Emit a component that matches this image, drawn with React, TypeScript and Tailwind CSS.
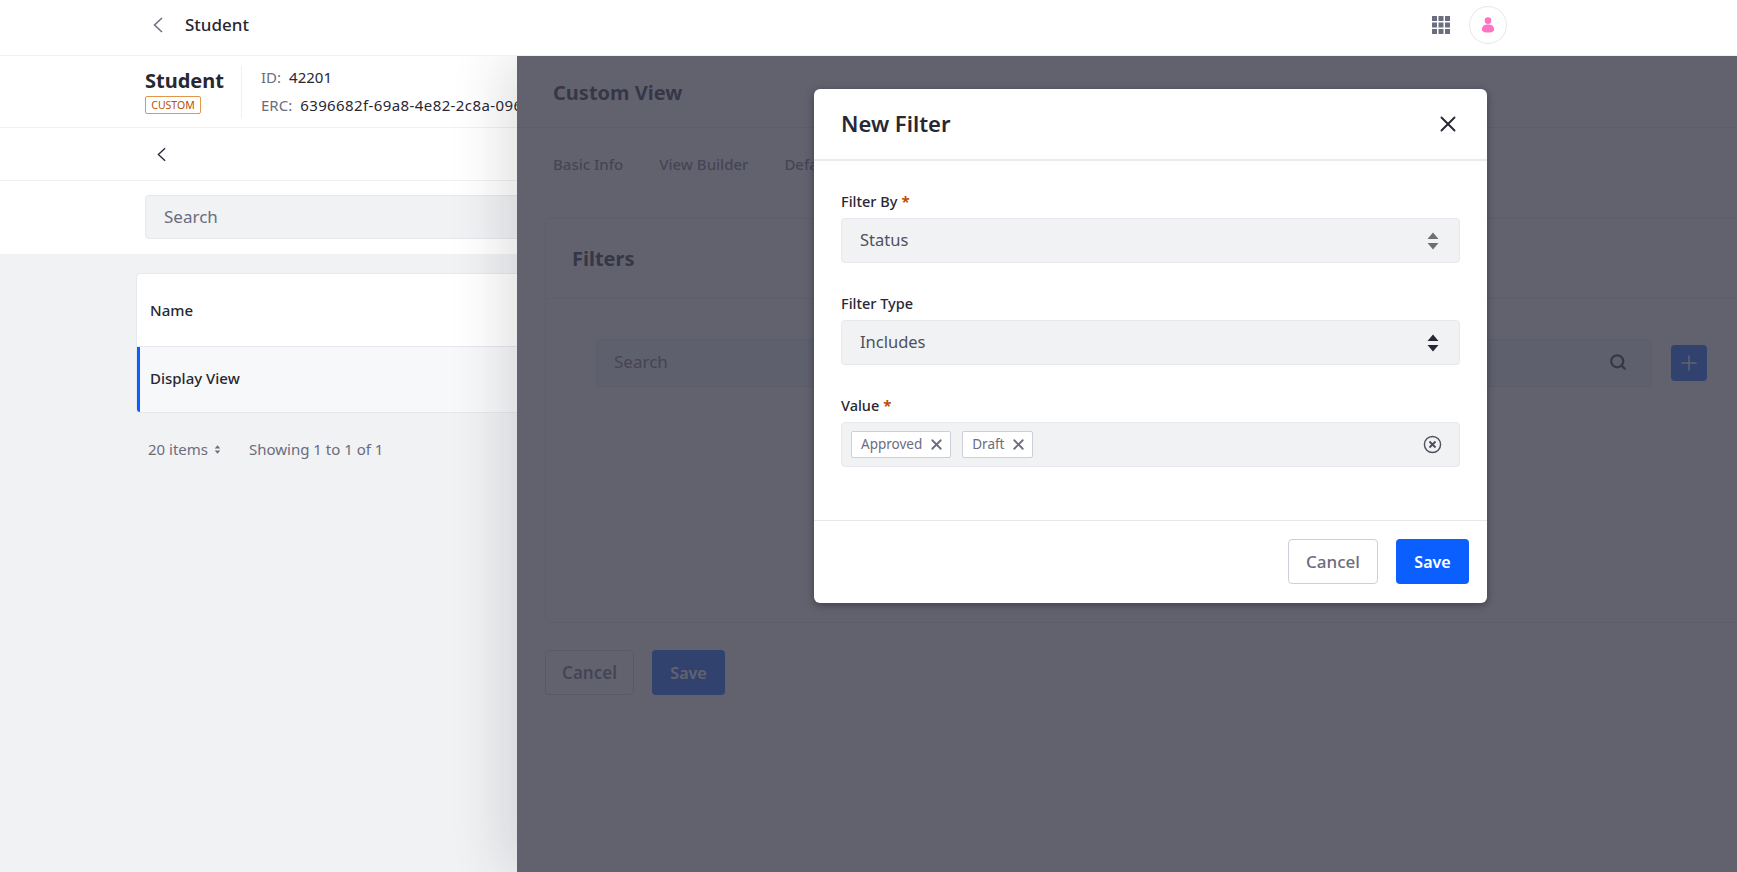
import { Search, Plus, X } from "lucide-react";

function SortArrows({ className }: { className: string }) {
  return (
    <svg viewBox="0 0 12 18" className={className} fill="currentColor">
      <path d="M6 0.5 11.5 7H0.5Z" />
      <path d="M0.5 11H11.5L6 17.5Z" />
    </svg>
  );
}

function BackArrow({ className }: { className: string }) {
  return (
    <svg viewBox="0 0 10 16" className={className} fill="none" stroke="currentColor" strokeWidth="1.5">
      <path d="M9 1 1.5 8 9 15" />
    </svg>
  );
}

function Field({ label, required, children }: { label: string; required?: boolean; children: React.ReactNode }) {
  return (
    <div>
      <label className="mb-[6px] flex h-[20px] items-center text-[14.5px] font-medium text-[#272833]">
        {label}
        {required && <span className="ml-[4px] -mt-[2px] text-[15px] font-bold text-[#b95000]">*</span>}
      </label>
      {children}
    </div>
  );
}

function SelectBox({ value, iconColor }: { value: string; iconColor: string }) {
  return (
    <div className="flex h-[45px] items-center justify-between rounded-[4px] border border-[#e7e7ed] bg-[#f1f2f4] pl-[18px] pr-[20px] text-[16.5px] text-[#4f505c]">
      <span>{value}</span>
      <SortArrows className={`h-[18px] w-[12px] ${iconColor}`} />
    </div>
  );
}

function Chip({ label }: { label: string }) {
  return (
    <span className="flex h-[27px] items-center gap-[6px] rounded-[2px] border border-[#cdced9] bg-white pl-[9px] pr-[5px] text-[13.5px] text-[#6b6c7e]">
      {label}
      <X className="h-[17px] w-[17px] text-[#6b6c7e]" strokeWidth={2.5} />
    </span>
  );
}

export default function App() {
  return (
    <div className="flex h-screen flex-col overflow-hidden bg-white font-['Noto_Sans',sans-serif] text-[#272833]">
      <header className="relative z-10 flex h-[56px] shrink-0 items-center border-b border-[#f0f0f3] bg-white pb-[6px] pl-[153px] pr-[230px]">
        <BackArrow className="h-[16px] w-[10px] text-[#6b6c7e]" />
        <span className="ml-[22px] text-[17px] font-medium">Student</span>
        <div className="ml-auto flex items-center gap-[19px]">
          <svg viewBox="0 0 18 18" className="h-[18px] w-[18px]" fill="#6b6c7e">
            <rect x="0" y="0" width="5" height="5" />
            <rect x="6.5" y="0" width="5" height="5" />
            <rect x="13" y="0" width="5" height="5" />
            <rect x="0" y="6.5" width="5" height="5" />
            <rect x="6.5" y="6.5" width="5" height="5" />
            <rect x="13" y="6.5" width="5" height="5" />
            <rect x="0" y="13" width="5" height="5" />
            <rect x="6.5" y="13" width="5" height="5" />
            <rect x="13" y="13" width="5" height="5" />
          </svg>
          <div className="flex h-[38px] w-[38px] items-center justify-center rounded-full border border-[#e7e7ed]">
            <svg viewBox="0 0 16 18" className="h-[16px] w-[14px]" fill="#ff73c3">
              <circle cx="8" cy="4" r="3.8" />
              <path d="M1 14c0-3.4 2.6-5.5 7-5.5s7 2.1 7 5.5c0 2.4-3 3.5-7 3.5s-7-1.1-7-3.5Z" />
            </svg>
          </div>
        </div>
      </header>

      <div className="relative flex-1">
        <div className="flex h-[72px] items-center border-b border-[#f0f0f3] pl-[145px]">
          <div className="w-[97px] border-r border-[#f0f0f3] pb-[4px] pt-[2px]">
            <div className="text-[20px] leading-[26px] font-bold">Student</div>
            <span className="mt-[2px] block w-[56px] rounded-[2px] border border-[#e0974d] text-center text-[10.5px] leading-[16px] text-[#b95000]">
              CUSTOM
            </span>
          </div>
          <div className="ml-[19px] text-[15px]">
            <div className="mb-[8px] flex h-[20px] items-center">
              <span className="mr-[8px] text-[#6b6c7e]">ID:</span>
              42201
            </div>
            <div className="flex h-[20px] items-center whitespace-nowrap">
              <span className="mr-[8px] text-[#6b6c7e]">ERC:</span>
              <span className="tracking-[0.4px]">6396682f-69a8-4e82-2c8a-096</span>
            </div>
          </div>
        </div>
        <div className="flex h-[53px] items-center border-b border-[#f0f0f3] pl-[157px]">
          <BackArrow className="h-[15px] w-[9px] text-[#272833]" />
        </div>
        <div className="h-[73px] pl-[145px] pt-[14px]">
          <div className="flex h-[44px] items-center rounded-[4px] border border-[#e7e7ed] bg-[#f1f2f4] pl-[18px] text-[17px] text-[#6b6c7e]">
            Search
          </div>
        </div>
        <div className="h-full bg-[#f1f2f4] pl-[136px] pt-[19px]">
          <div className="overflow-hidden rounded-[4px] border border-[#e7e7ed] bg-white">
            <div className="flex h-[73px] items-center border-b border-[#e7e7ed] pl-[13px] text-[15px] font-medium">Name</div>
            <div className="flex h-[65px] items-center border-l-[3px] border-[#0b5fff] bg-[#f7f8f9] pb-[2px] pl-[10px] text-[15px] font-medium">
              Display View
            </div>
          </div>
          <div className="mt-[25px] flex items-center pl-[12px] text-[15px] text-[#6b6c7e]">
            <span>20 items</span>
            <SortArrows className="ml-[6px] h-[9px] w-[7px]" />
            <span className="ml-[28px]">Showing 1 to 1 of 1</span>
          </div>
        </div>

        <div className="absolute inset-y-0 left-[517px] right-0 bg-white shadow-[-14px_0_50px_rgba(39,40,51,0.14)]">
          <div className="flex h-[72px] items-center border-b border-[#e7e7ed] pl-[36px] pt-[2px] text-[20px] font-bold">Custom View</div>
          <div className="flex h-[72px] items-center gap-[36px] pl-[36px] text-[15px] font-medium text-[#6b6c7e]">
            <span>Basic Info</span>
            <span>View Builder</span>
            <span>Default Filters</span>
          </div>
          <div className="ml-[28px] mt-[18px] h-[405px] rounded-l-[4px] border-y border-l border-[#e7e7ed]">
            <div className="flex h-[80px] items-center border-b border-[#e7e7ed] pl-[26px] text-[20px] font-bold">Filters</div>
            <div className="flex items-center pl-[50px] pr-[30px] pt-[40px]">
              <div className="flex h-[48px] flex-1 items-center justify-between rounded-[4px] border border-[#e7e7ed] bg-[#f1f2f4] pb-[2px] pl-[17px] pr-[24px] text-[17px] text-[#6b6c7e]">
                Search
                <Search className="h-[18px] w-[18px] text-[#272833]" strokeWidth={3} />
              </div>
              <div className="ml-[19px] flex h-[36px] w-[36px] items-center justify-center rounded-[4px] bg-[#0b5fff]">
                <Plus className="h-[24px] w-[24px] text-white" strokeWidth={1.5} />
              </div>
            </div>
          </div>
          <div className="ml-[28px] mt-[27px] flex gap-[18px]">
            <div className="flex h-[45px] w-[89px] items-center justify-center rounded-[4px] border border-[#cdced9] text-[17px] font-semibold text-[#6b6c7e]">
              Cancel
            </div>
            <div className="flex h-[45px] w-[73px] items-center justify-center rounded-[4px] bg-[#0b5fff] text-[16px] font-semibold text-white">
              Save
            </div>
          </div>
          <div className="absolute inset-0 bg-[rgba(59,59,75,0.8)]" />
        </div>

        <div className="absolute left-[814px] top-[33px] h-[514px] w-[673px] rounded-[6px] bg-white shadow-[0_2px_8px_rgba(0,0,0,0.35)]">
          <div className="flex h-[72px] items-center justify-between border-b-2 border-[#ebebef] pl-[27px] pr-[26px]">
            <span className="-mt-[2px] text-[22px] font-semibold">New Filter</span>
            <X className="h-[26px] w-[26px] text-[#272833]" strokeWidth={1.75} />
          </div>
          <div className="h-[360px] border-b border-[#e7e7ed] px-[27px] pt-[31px]">
            <Field label="Filter By" required>
              <SelectBox value="Status" iconColor="text-[#6f6f6f]" />
            </Field>
            <div className="mt-[31px]">
              <Field label="Filter Type">
                <SelectBox value="Includes" iconColor="text-[#272833]" />
              </Field>
            </div>
            <div className="mt-[31px]">
              <Field label="Value" required>
                <div className="flex h-[45px] items-center justify-between rounded-[4px] border border-[#e7e7ed] bg-[#f1f2f4] pl-[9px] pr-[17px]">
                  <div className="flex gap-[11px]">
                    <Chip label="Approved" />
                    <Chip label="Draft" />
                  </div>
                  <svg viewBox="0 0 20 20" className="h-[19px] w-[19px]" fill="none" stroke="#4f505c" strokeWidth="1.5">
                    <circle cx="10" cy="10" r="8.5" />
                    <path d="M6.8 6.8 13.2 13.2M13.2 6.8 6.8 13.2" strokeWidth="2" />
                  </svg>
                </div>
              </Field>
            </div>
          </div>
          <div className="flex justify-end gap-[18px] pr-[18px] pt-[18px]">
            <div className="flex h-[45px] w-[90px] items-center justify-center rounded-[4px] border border-[#cdced9] text-[17px] font-medium text-[#6b6c7e]">
              Cancel
            </div>
            <div className="flex h-[45px] w-[73px] items-center justify-center rounded-[4px] bg-[#0b5fff] text-[16px] font-semibold text-white">
              Save
            </div>
          </div>
        </div>
      </div>
    </div>
  );
}
